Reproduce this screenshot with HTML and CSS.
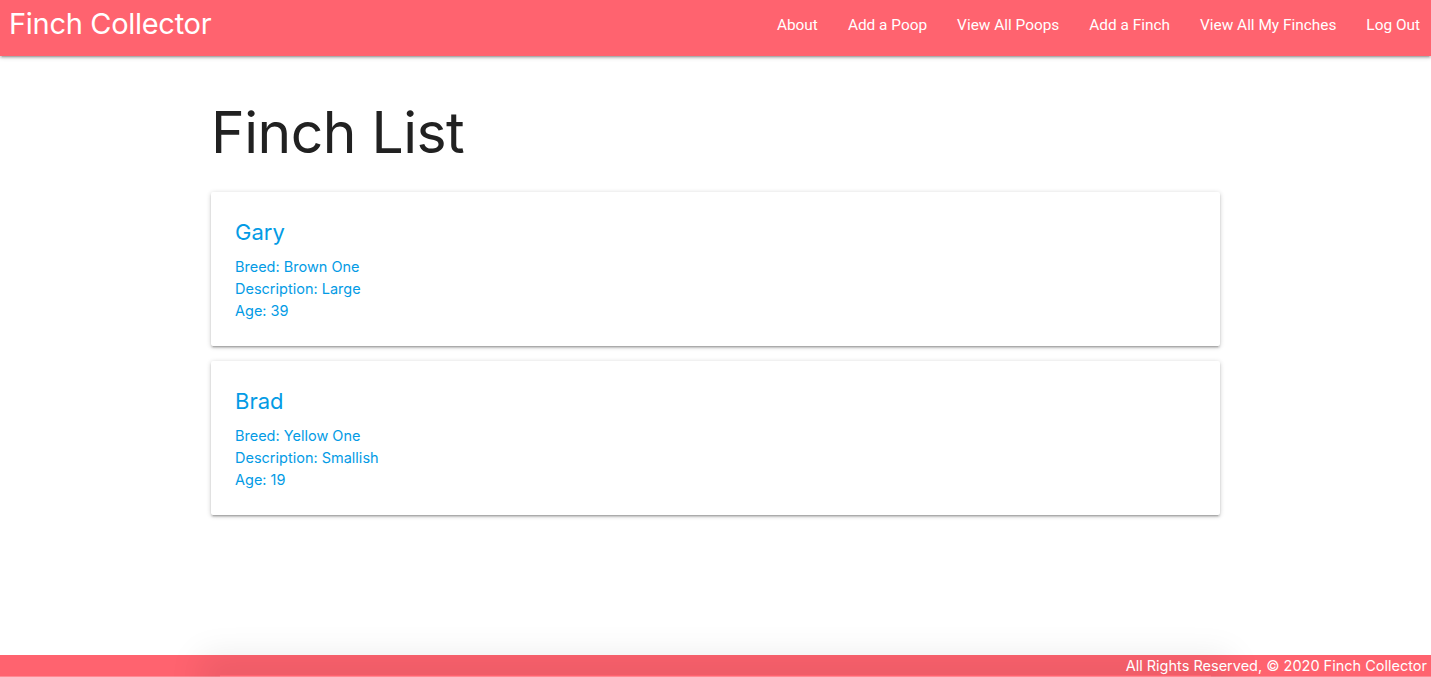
FILE: index.html
```html
<!DOCTYPE html>
<html lang="en">
<head>
<meta charset="utf-8">
<title>Finch Collector</title>
<link rel="stylesheet" href="styles.css">
</head>
<body>
<header class="nav">
  <a class="brand" href="#">Finch Collector</a>
  <ul class="nav-links">
    <li><a href="#">About</a></li>
    <li><a href="#">Add a Poop</a></li>
    <li><a href="#">View All Poops</a></li>
    <li><a href="#">Add a Finch</a></li>
    <li><a href="#">View All My Finches</a></li>
    <li><a href="#">Log Out</a></li>
  </ul>
</header>
<main class="container">
  <h1 class="page-title">Finch List</h1>
  <a class="card" href="#">
    <div class="card-content">
      <span class="card-title">Gary</span>
      <p>Breed: Brown One</p>
      <p>Description: Large</p>
      <p>Age: 39</p>
    </div>
  </a>
  <a class="card" href="#">
    <div class="card-content">
      <span class="card-title">Brad</span>
      <p>Breed: Yellow One</p>
      <p>Description: Smallish</p>
      <p>Age: 19</p>
    </div>
  </a>
</main>
<footer class="footer">
  <span class="footer-shade"></span>
  <span class="footer-text">All Rights Reserved, © 2020 Finch Collector</span>
</footer>
</body>
</html>
```

FILE: styles.css
```css
* { box-sizing: border-box; }
html, body { margin: 0; padding: 0; }
body {
  font-family: Inter, "Noto Sans", Roboto, sans-serif;
  font-size: 15px;
  line-height: 1.5;
  color: rgba(0,0,0,0.87);
  background: #fff;
  height: 100vh;
  display: flex;
  flex-direction: column;
  overflow: hidden;
}
a { text-decoration: none; }

.nav {
  flex: none;
  height: 56px;
  background: #ff636f;
  display: flex;
  align-items: flex-start;
  justify-content: space-between;
  box-shadow: 0 2px 2px 0 rgba(0,0,0,0.14), 0 3px 1px -2px rgba(0,0,0,0.12), 0 1px 5px 0 rgba(0,0,0,0.2);
  position: relative;
  z-index: 2;
}
.brand {
  color: #fff;
  font-size: 29px;
  letter-spacing: -0.3px;
  padding-left: 9px;
  line-height: 48px;
}
.nav-links {
  list-style: none;
  margin: 0;
  padding: 0;
  display: flex;
  margin-right: -4px;
}
.nav-links a {
  display: block;
  color: #fff;
  font-family: Roboto, Inter, sans-serif;
  font-size: 15.4px;
  padding: 0 15px;
  line-height: 50px;
}

.container {
  width: 1009px;
  margin: 0 auto;
  flex: none;
}
.page-title {
  font-weight: 400;
  font-size: 57px;
  line-height: 1.1;
  letter-spacing: -0.5px;
  margin: 46px 0 27px;
  color: #212121;
}
.card {
  display: block;
  background: #fff;
  border-radius: 2px;
  margin: 0 0 15px;
  color: #039be5;
  box-shadow: 0 2px 2px 0 rgba(0,0,0,0.14), 0 3px 1px -2px rgba(0,0,0,0.12), 0 1px 5px 0 rgba(0,0,0,0.2);
}
.card-content {
  padding: 24px;
}
.card-title {
  display: block;
  font-size: 22px;
  line-height: 32px;
  margin-bottom: 8px;
}
.card-content p {
  margin: 0;
  font-size: 14.5px;
  line-height: 22px;
}

.footer {
  margin-top: auto;
  flex: none;
  height: 22px;
  background: #ff636f;
  color: #fff;
  display: flex;
  justify-content: flex-end;
  align-items: center;
  position: relative;
  border-bottom: 1px solid #ff8a93;
}
.footer-shade {
  position: absolute;
  left: 220px;
  right: 220px;
  top: 20px;
  height: 2px;
  box-shadow: 0 0 34px 20px rgba(0,0,0,0.08);
  pointer-events: none;
}
.footer-text {
  position: relative;
  font-size: 14.5px;
  line-height: 22px;
  padding-right: 4px;
}
```
